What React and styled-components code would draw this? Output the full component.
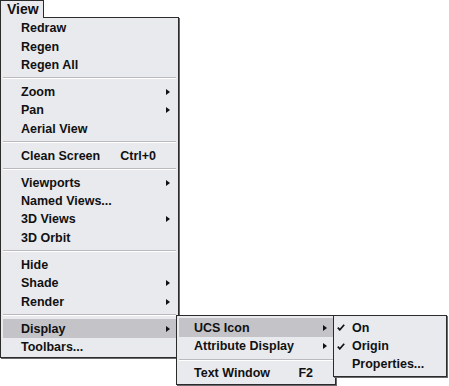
import React from 'react';
import styled, { createGlobalStyle } from 'styled-components';

const GlobalStyle = createGlobalStyle`
  html, body {
    margin: 0;
    padding: 0;
    background: #ffffff;
  }
  body {
    font-family: "Liberation Sans", Arial, sans-serif;
    color: #111;
  }
`;

const Screen = styled.div`
  display: flex;
  flex-direction: column;
  align-items: flex-start;
  width: 449px;
  height: 386px;
  overflow: hidden;
`;

const MenuTitle = styled.div`
  position: relative;
  z-index: 2;
  box-sizing: border-box;
  width: 44px;
  height: 18px;
  padding: 0 0 1px 6px;
  border: 1px solid #2b2b2b;
  border-bottom: none;
  background: #e9eaee;
  font-weight: 700;
  font-size: 14px;
  line-height: 16px;
`;

const MenuPanel = styled.div`
  position: ${p => (p.$floating ? 'absolute' : 'relative')};
  box-sizing: border-box;
  width: ${p => p.$width}px;
  margin-top: ${p => (p.$floating ? 0 : -1)}px;
  padding: ${p => (p.$floating ? '2px' : '1px 2px 1px')};
  border: 1px solid #2b2b2b;
  box-shadow: 1px 1px 0 #6a6a6e;
  background: #e9eaee;
  display: flex;
  flex-direction: column;
`;

const SubPanel = styled(MenuPanel)`
  left: 100%;
  top: ${p => p.$top}px;
  z-index: 3;
`;

const Row = styled.div`
  position: relative;
  display: grid;
  grid-template-columns: ${p => (p.$check ? '16px 1fr' : '1fr auto 20px')};
  align-items: center;
  height: 18.4px;
  padding-left: ${p => p.$indent}px;
  background: ${p => (p.$active ? '#c3c3c8' : 'transparent')};
  font-weight: 700;
  font-size: 12.5px;
  white-space: nowrap;
`;

const Label = styled.span`
  line-height: 18px;
`;

const Shortcut = styled.span`
  line-height: 18px;
`;

const Arrow = styled.span`
  justify-self: start;
  margin-left: 10px;
  width: 0;
  height: 0;
  border-left: 4px solid #111;
  border-top: 3.5px solid transparent;
  border-bottom: 3.5px solid transparent;
`;

const Separator = styled.div`
  height: 8.6px;
  display: flex;
  flex-direction: column;
  justify-content: center;

  &::before {
    content: '';
    display: block;
    height: 1px;
    background: #b9b9be;
  }
  &::after {
    content: '';
    display: block;
    height: 1px;
    background: #ffffff;
  }
`;

const CheckIcon = () => (
  <svg width="8" height="7" viewBox="0 0 8 7" style={{ marginLeft: 1 }}>
    <polyline points="0.8,3.6 2.8,5.8 7.2,0.8" fill="none" stroke="#111" strokeWidth="1.7" />
  </svg>
);

const MenuRow = ({ label, shortcut, sub, active, indent, children }) => (
  <Row $active={active} $indent={indent}>
    <Label>{label}</Label>
    <Shortcut>{shortcut || ''}</Shortcut>
    {sub ? <Arrow /> : <span />}
    {children}
  </Row>
);

const CheckRow = ({ label, checked }) => (
  <Row $check $indent={0}>
    {checked ? <CheckIcon /> : <span />}
    <Label>{label}</Label>
  </Row>
);

const ucsItems = [
  { label: 'On', checked: true },
  { label: 'Origin', checked: true },
  { label: 'Properties...', checked: false }
];

const DisplayMenu = () => (
  <SubPanel $floating $width={160} $top={-4}>
    <MenuRow label="UCS Icon" sub active indent={15}>
      <SubPanel $floating $width={114} $top={-3}>
        {ucsItems.map(item => (
          <CheckRow key={item.label} {...item} />
        ))}
      </SubPanel>
    </MenuRow>
    <MenuRow label="Attribute Display" sub indent={15} />
    <Separator />
    <MenuRow label="Text Window" shortcut="F2" indent={15} />
  </SubPanel>
);

const groups = [
  [{ label: 'Redraw' }, { label: 'Regen' }, { label: 'Regen All' }],
  [{ label: 'Zoom', sub: true }, { label: 'Pan', sub: true }, { label: 'Aerial View' }],
  [{ label: 'Clean Screen', shortcut: 'Ctrl+0' }],
  [
    { label: 'Viewports', sub: true },
    { label: 'Named Views...' },
    { label: '3D Views', sub: true },
    { label: '3D Orbit' }
  ],
  [{ label: 'Hide' }, { label: 'Shade', sub: true }, { label: 'Render', sub: true }],
  [{ label: 'Display', sub: true, active: true, open: true }, { label: 'Toolbars...' }]
];

const App = () => {
  return (
    <Screen>
      <GlobalStyle />
      <MenuTitle>View</MenuTitle>
      <MenuPanel $width={179}>
        {groups.map((group, gi) => (
          <React.Fragment key={gi}>
            {gi > 0 && <Separator />}
            {group.map(item => (
              <MenuRow key={item.label} {...item} indent={18}>
                {item.open && <DisplayMenu />}
              </MenuRow>
            ))}
          </React.Fragment>
        ))}
      </MenuPanel>
    </Screen>
  );
};

export default App;
